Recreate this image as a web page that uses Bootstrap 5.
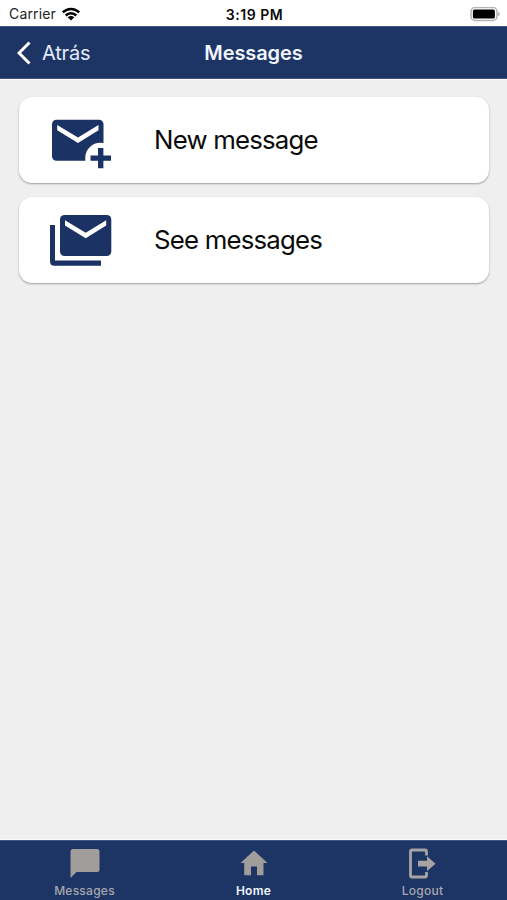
<!DOCTYPE html>
<html lang="es">
<head>
<meta charset="utf-8">
<meta name="viewport" content="width=device-width, initial-scale=1">
<title>Messages</title>
<link href="https://cdn.jsdelivr.net/npm/bootstrap@5.3.0/dist/css/bootstrap.min.css" rel="stylesheet">
<style>
body{font-family:Inter,"Liberation Sans",sans-serif;background:#efefef;color:#0b0b0b;line-height:1}
svg{display:block;flex:none}
.tri{display:grid;grid-template-columns:1fr auto 1fr;align-items:center}
.status-strip{height:26px;padding:2px 7px 0 9px;font-size:14px;background:#fff}
.carrier{letter-spacing:.15px;color:#222}
.carrier-row{gap:5px}
.clock{font-weight:600;font-size:14px;letter-spacing:.55px;padding-top:1px}
.title-bar{height:53px;background:#1d3565;color:#f1f5ff;border-top:1px solid #435681;border-bottom:1px solid #435681;padding:0 17px;box-shadow:0 1px #fafafa}
.back-link{font-size:20px;gap:11px;color:#e3ebff;letter-spacing:-.2px}
.title-bar h1{font-size:20px;font-weight:600;letter-spacing:-.1px}
.menu-list{padding:18px 18px 0 19px;gap:14px}
.menu-card{height:86px;border-radius:13px;box-shadow:0 1px 2px rgba(0,0,0,.35);padding-left:31px;color:#0b0b0b;font-size:25.8px;letter-spacing:-.8px}
.menu-card span{margin-left:42px}
.tab-strip{height:60px;background:#1d3565;border-top:1px solid #435681;box-shadow:0 -1px #fafafa;font-size:12px;color:#a7a7ad}
.tab-strip a{color:inherit;padding-top:6px;gap:6px;font-weight:500;letter-spacing:.25px}
.tab-strip a.current{color:#f1f5ff;font-weight:600}
</style>
</head>
<body class="d-flex flex-column vh-100 overflow-hidden">
<div class="status-strip tri">
  <div class="carrier-row d-flex align-items-center">
    <span class="carrier">Carrier</span>
    <svg width="20" height="15" viewBox="0 0 20 15"><g fill="none" stroke="#000" stroke-width="2.5"><path d="M1.800 5.400C6.500.7 13.500.7 18.200 5.400"/><path d="M4.700 8.500C7.700 5.600 12.300 5.600 15.300 8.500"/></g><path d="M6.700 10.200C8.500 8.500 11.500 8.500 13.300 10.200L10 13.500Z"/></svg>
  </div>
  <div class="clock">3:19 PM</div>
  <svg class="ms-auto" width="30" height="15" viewBox="0 0 30 15"><rect x="1" y=".5" width="26" height="13" rx="4" fill="#fff" stroke="#b3b3b3" stroke-width="1.500"/><rect x="2.900" y="2.400" width="22" height="9.200" rx="1.500"/><path d="M28.200 4.700v4.600c2-.6 2-4 0-4.600Z" fill="#aaa"/></svg>
</div>
<header class="title-bar tri">
  <a href="#" class="back-link d-flex align-items-center text-decoration-none">
    <svg width="14" height="24" viewBox="0 0 14 24"><path d="M12.500 1.500 2 12l10.500 10.500" fill="none" stroke="#fff" stroke-width="3"/></svg>
    <span>Atrás</span>
  </a>
  <h1 class="m-0">Messages</h1>
</header>
<main class="menu-list d-flex flex-column flex-grow-1">
  <a href="#" class="menu-card bg-white d-flex align-items-center text-decoration-none">
    <svg width="62" height="54" viewBox="50 113 62 54" overflow="visible"><rect x="52" y="119.700" width="51.500" height="41" rx="4.500" fill="#1b3265"/><path d="M57.200 125 78 137.400 98.500 125v5.300L78 142.900 57.200 130.300Z" fill="#fff"/><circle cx="100.500" cy="158" r="15.300" fill="#fff"/><path d="M98 148h5.400v7.500h7.600v5.200h-7.600v7.600H98v-7.600h-7.500v-5.200H98Z" fill="#1b3265"/></svg>
    <span>New message</span>
  </a>
  <a href="#" class="menu-card bg-white d-flex align-items-center text-decoration-none">
    <svg width="62" height="54" viewBox="50 213 62 54"><g fill="#1b3265"><rect x="60" y="215" width="51.300" height="41" rx="4.500"/><path d="M50 225h5v35.500h46v5.300H54.500Q50 265.800 50 261.300Z"/></g><path d="M65 220.200 85.700 232.700 106.200 220.200v5.300L85.700 238.200 65 225.500Z" fill="#fff"/></svg>
    <span>See messages</span>
  </a>
</main>
<nav class="tab-strip row g-0">
  <a href="#" class="col d-flex flex-column align-items-center text-decoration-none">
    <svg width="30" height="32" viewBox="70 847 30 32"><path d="M73 849h24q2.500 0 2.500 2.500v18q0 2.500-2.500 2.500H76.500L70.500 878v-26.500Q70.500 849 73 849Z" fill="#a09d9b"/></svg>
    <span>Messages</span>
  </a>
  <a href="#" class="col d-flex flex-column align-items-center text-decoration-none current">
    <svg width="28" height="32" viewBox="240 847 28 32"><path d="M254 850.500 267.500 863H263.500v12.300H257v-8.800h-6v8.800h-6.800V863H240.500Z" fill="#a09d9b"/></svg>
    <span>Home</span>
  </a>
  <a href="#" class="col d-flex flex-column align-items-center text-decoration-none">
    <svg width="28" height="32" viewBox="409 847 28 32"><path d="M426.500 855.500v-4q0-1.500-1.500-1.500h-13q-1.500 0-1.500 1.500v24q0 1.500 1.500 1.500h13q1.500 0 1.500-1.500V872" fill="none" stroke="#a7a3a3" stroke-width="2.800"/><path d="M418 860.800h9v-4.600l8.500 7.500-8.500 7.500v-4.600h-9Z" fill="#a7a3a3"/></svg>
    <span>Logout</span>
  </a>
</nav>
<script src="https://cdn.jsdelivr.net/npm/bootstrap@5.3.0/dist/js/bootstrap.bundle.min.js"></script>
</body>
</html>
